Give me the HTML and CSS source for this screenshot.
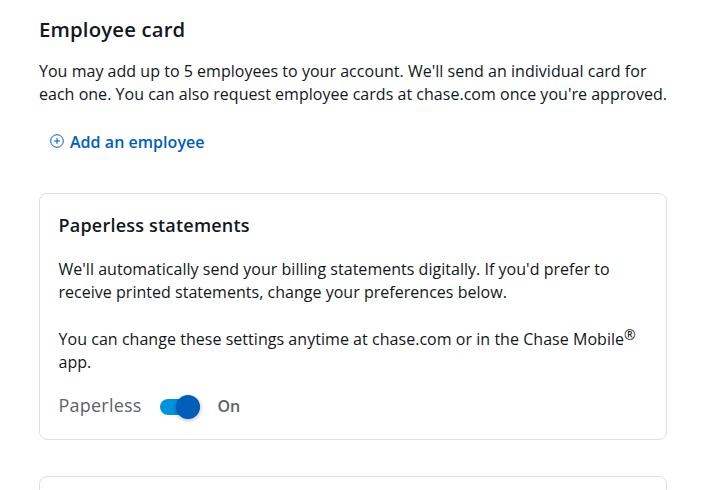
FILE: index.html
```html
<!DOCTYPE html>
<html lang="en">
<head>
<meta charset="utf-8">
<title>Employee card</title>
<link rel="stylesheet" href="styles.css">
</head>
<body>
<main class="page">
<section class="employee">
<h2 class="title">Employee card</h2>
<p class="text intro">You may add up to 5 employees to your account. We'll send an individual card for<br>each one. You can also request employee cards at chase.com once you're approved.</p>
<a class="add" href="#"><svg class="add-icon" viewBox="0 0 14 14"><circle cx="7" cy="7" r="6.3"/><path d="M7 4v6M4 7h6"/></svg><span>Add an employee</span></a>
</section>
<section class="card">
<h3 class="subtitle">Paperless statements</h3>
<p class="text">We'll automatically send your billing statements digitally. If you'd prefer to<br>receive printed statements, change your preferences below.</p>
<p class="text settings">You can change these settings anytime at chase.com or in the Chase Mobile<sup>®</sup><br>app.</p>
<div class="toggle-row"><span class="label">Paperless</span><span class="switch"><span class="knob"></span></span><span class="state">On</span></div>
</section>
<section class="card next"></section>
</main>
</body>
</html>
```
FILE: styles.css
```css
* { box-sizing: border-box; }
body { margin: 0; background: #fff; color: #111820; font-family: "Open Sans", sans-serif; overflow: hidden; }
.page { width: 628px; margin-left: 39px; height: 490px; overflow: hidden; padding-top: 15px; }
h2, h3, p { margin: 0; }
.title { font-size: 20.3px; line-height: 28px; font-weight: 600; letter-spacing: 0.18px; }
.text { font-size: 16px; line-height: 23px; white-space: nowrap; letter-spacing: 0.025px; }
.title + .text { margin-top: 17px; }
.add { display: flex; align-items: center; margin: 24px 0 0 11px; height: 24px; color: #005eb8; font-size: 16px; font-weight: 600; letter-spacing: 0.04px; text-decoration: none; }
.add-icon { width: 14px; height: 14px; margin: -2px 6px 0 0; fill: none; stroke: #005eb8; stroke-width: 1; }
.card { margin-top: 39px; height: 247px; border: 1px solid #dfe0e1; border-radius: 8px; padding: 18px 19px 18px 18.5px; }
.subtitle { font-size: 18px; line-height: 26px; font-weight: 600; letter-spacing: 0.21px; }
.subtitle + .text { margin-top: 20px; }
.settings { margin-top: 24px; letter-spacing: 0.04px; }
.settings sup { font-size: 14px; line-height: 0; vertical-align: 5px; }
.toggle-row { display: flex; align-items: center; height: 24px; margin-top: 21px; color: #5c6368; }
.label { font-size: 18px; width: 101.5px; letter-spacing: 0.22px; margin-top: -4px; }
.switch { width: 40px; height: 16px; border-radius: 8px; background: #0092db; display: flex; justify-content: flex-end; align-items: center; }
.knob { width: 24px; height: 24px; flex: none; border-radius: 50%; background: #005eb8; box-shadow: 0 1px 4px rgba(0, 0, 0, 0.3); }
.state { font-size: 16px; font-weight: 600; margin: -2px 0 0 17.5px; }
.next { margin-top: 36px; }
```
